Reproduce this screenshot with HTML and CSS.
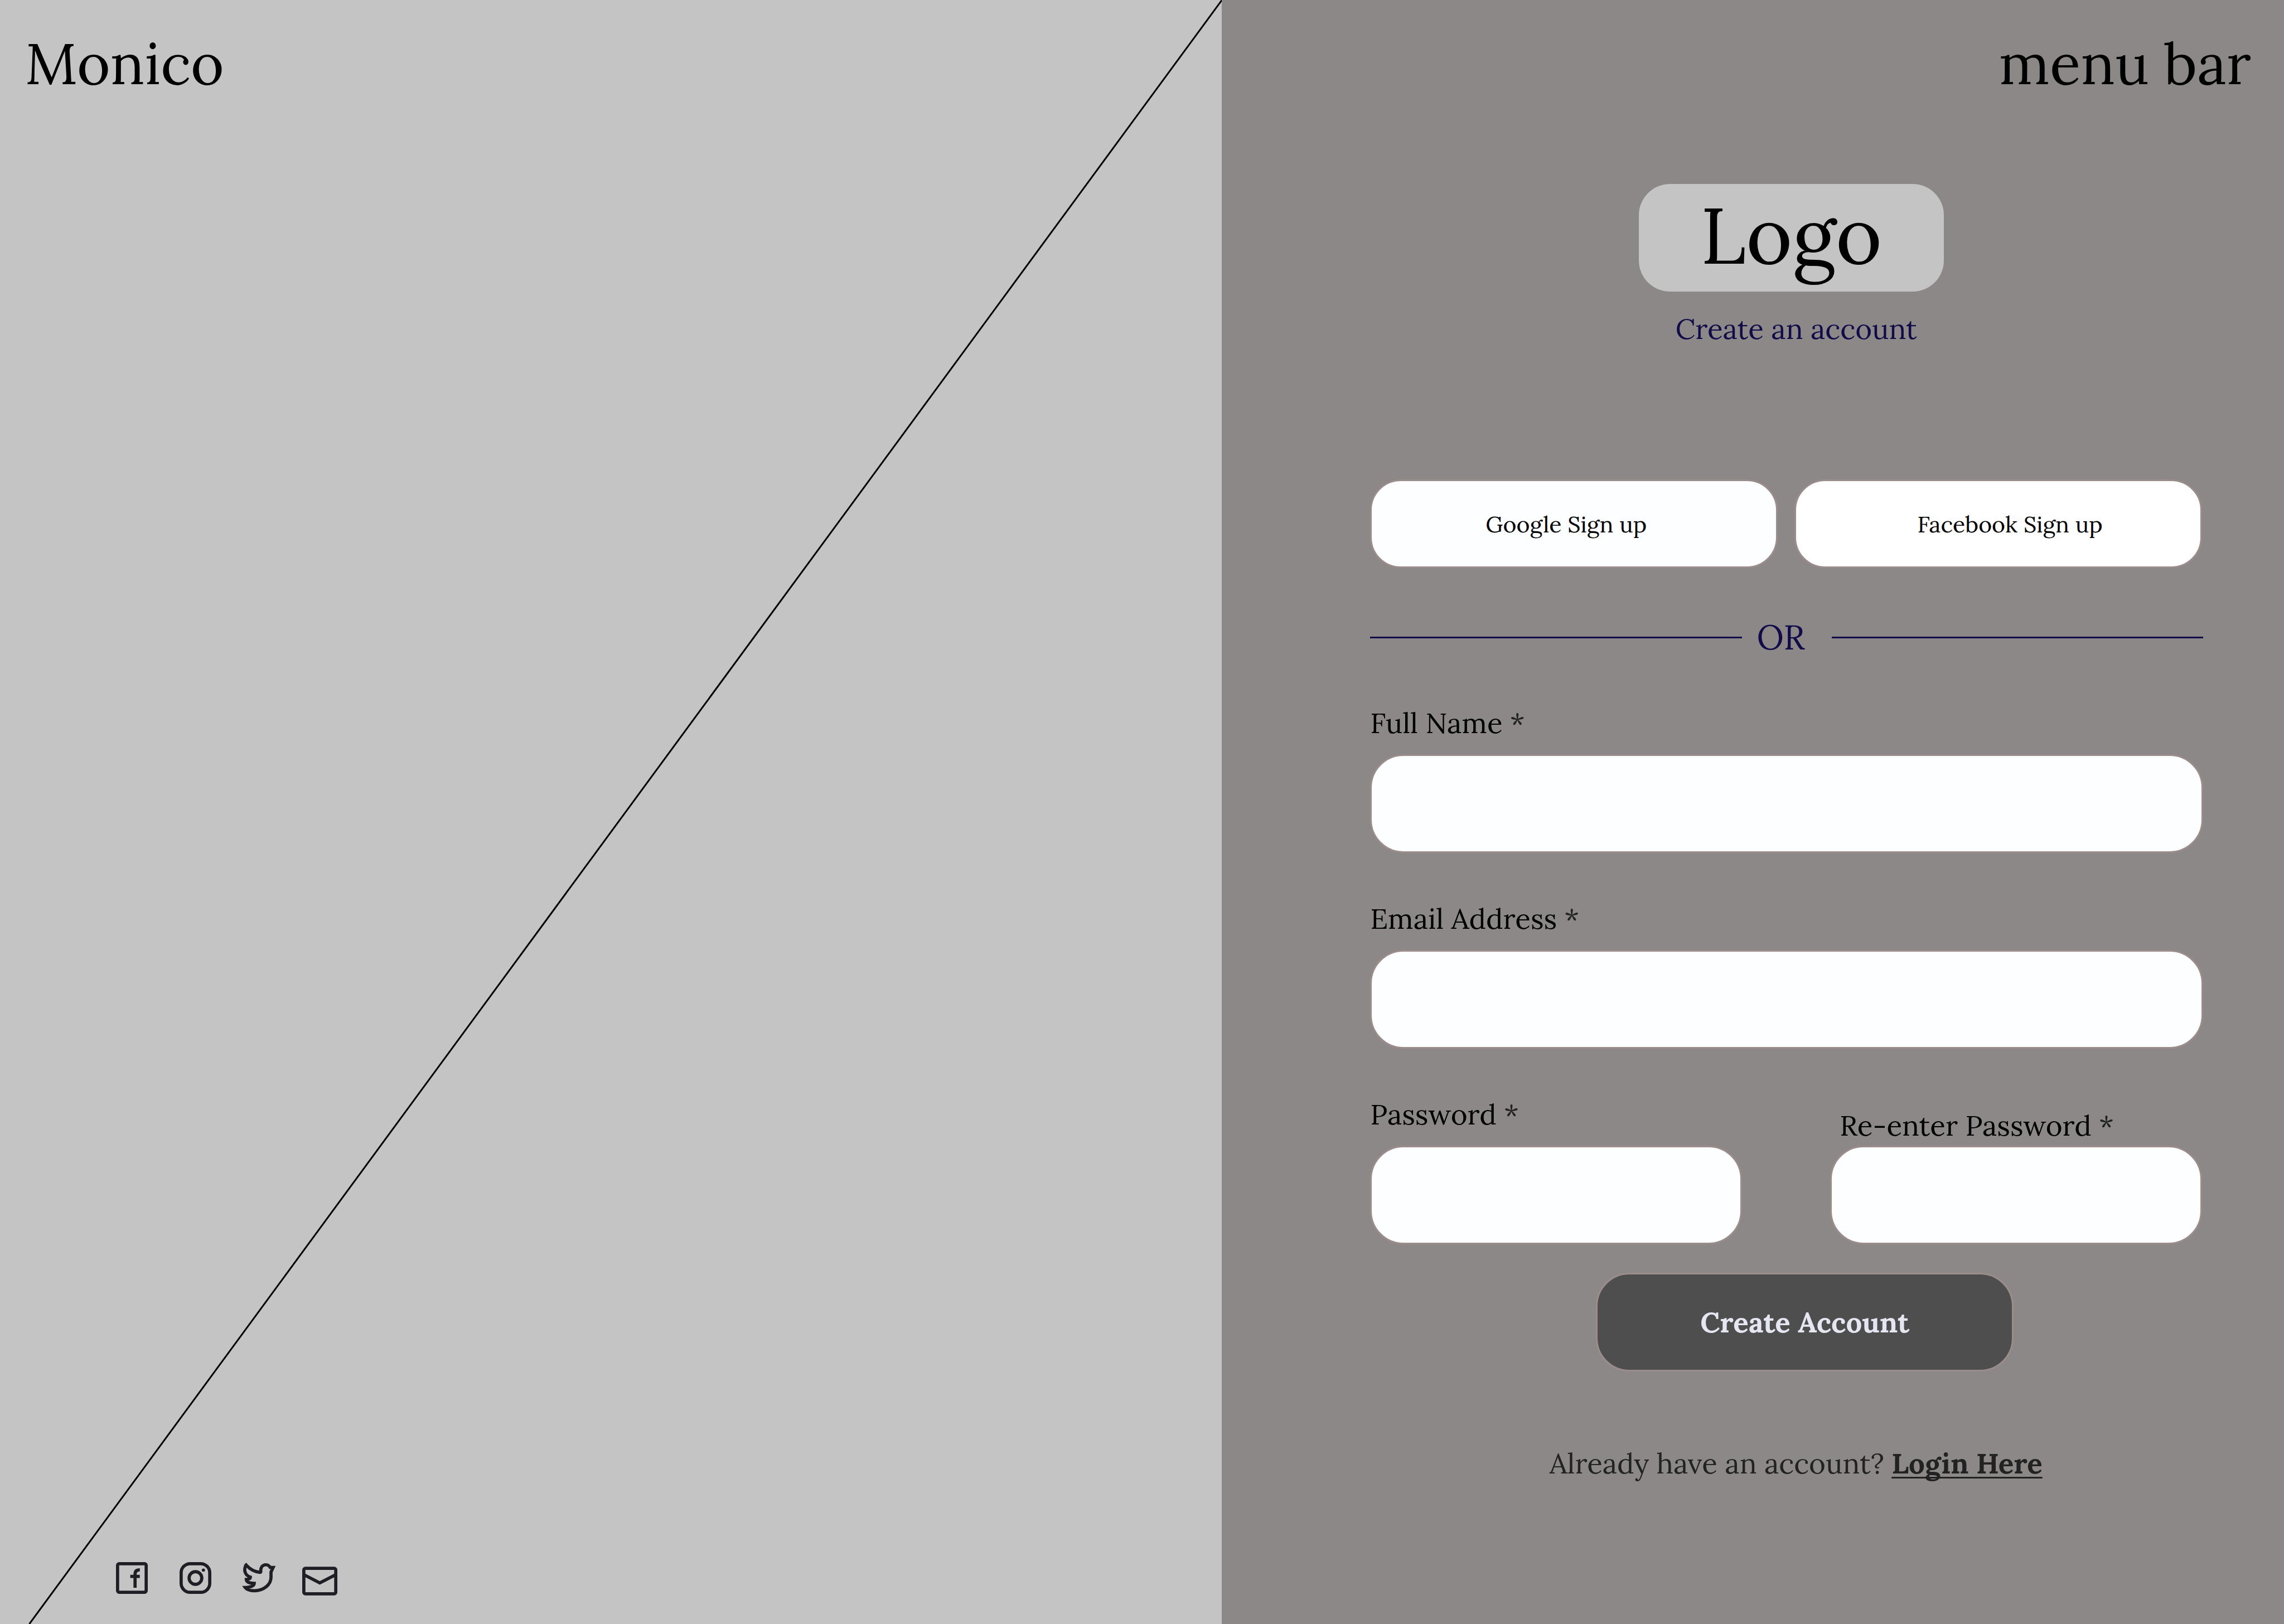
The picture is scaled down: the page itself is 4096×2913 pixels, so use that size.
FILE: index.html
```html
<!DOCTYPE html>
<html lang="en">
<head>
<meta charset="utf-8">
<title>Monico - Create an account</title>
<meta name="viewport" content="width=device-width, initial-scale=1">
<link rel="stylesheet" href="styles.css">
</head>
<body>
<div class="page">
  <section class="hero">
    <svg class="hero-line" aria-hidden="true"><line x1="100%" y1="0" x2="2.4%" y2="100%"/></svg>
    <a class="brand" href="#">Monico</a>
    <nav class="social" aria-label="Social media">
      <a class="social-link" href="#" aria-label="Facebook">
        <svg class="icon" viewBox="0 0 180 180"><rect x="9" y="9" width="162" height="162" rx="9"/><path d="M108 145V68Q108 44 135 44M81 81H135"/></svg>
      </a>
      <a class="social-link" href="#" aria-label="Instagram">
        <svg class="icon" viewBox="0 0 180 180"><rect x="9" y="9" width="162" height="162" rx="51"/><circle cx="90" cy="90" r="36"/><circle class="dot" cx="135" cy="45" r="9"/></svg>
      </a>
      <a class="social-link" href="#" aria-label="Twitter">
        <svg class="icon" viewBox="0 0 180 180"><path d="M17 16C38 40 66 55 96 58Q101 58 100 50C98 10 140 6 153 30L170 30L158 56V88C156 128 118 162 63 162C38 162 22 158 12 144C38 144 62 136 63 120C38 120 19 114 18 98C32 97 41 92 41 85C14 76 4 52 12 26Q13 20 17 16Z"/></svg>
      </a>
      <a class="social-link" href="#" aria-label="Email">
        <svg class="icon icon-mail" viewBox="0 0 198 162"><rect x="9" y="9" width="180" height="144" rx="9"/><path d="M9 45L99 91L189 45"/></svg>
      </a>
    </nav>
  </section>

  <main class="panel">
    <button class="menu" type="button">menu bar</button>
    <div class="content">
      <div class="logo-row"><div class="logo">Logo</div></div>
      <h1 class="title">Create an account</h1>
      <form class="form">
        <div class="providers">
          <button class="provider provider-google" type="button">Google Sign up</button>
          <button class="provider provider-facebook" type="button">Facebook Sign up</button>
        </div>
        <div class="divider"><span class="divider-text">OR</span></div>
        <div class="field">
          <label class="label" for="name">Full Name <span class="star">*</span></label>
          <input class="input" id="name" type="text">
        </div>
        <div class="field">
          <label class="label" for="email">Email Address <span class="star">*</span></label>
          <input class="input" id="email" type="email">
        </div>
        <div class="field-pair">
          <div class="field">
            <label class="label" for="password">Password <span class="star">*</span></label>
            <input class="input" id="password" type="password">
          </div>
          <div class="field field-tight">
            <label class="label" for="repeat">Re-enter Password <span class="star">*</span></label>
            <input class="input" id="repeat" type="password">
          </div>
        </div>
        <div class="submit-row"><button class="submit" type="submit">Create Account</button></div>
      </form>
      <p class="login">Already have an account? <a class="login-link" href="#">Login Here</a></p>
    </div>
  </main>
</div>
</body>
</html>
```
FILE: styles.css
```css
* {
  box-sizing: border-box;
}

body {
  margin: 0;
  font-family: Lora, "Liberation Serif", serif;
  color: #000;
  background: #8c8887;
}

button,
input {
  font-family: inherit;
  color: inherit;
}

.page {
  display: grid;
  grid-template-columns: 53.5% 1fr;
  min-height: 100vh;
}

/* Left side */
.hero {
  position: relative;
  display: flex;
  flex-direction: column;
  justify-content: space-between;
  align-items: flex-start;
  padding: 46px 45px 51px;
  background: #c4c4c4;
}

.hero-line {
  position: absolute;
  inset: 0;
  width: 100%;
  height: 100%;
  stroke: #000;
  stroke-width: 3;
}

.brand {
  position: relative;
  font-size: 102px;
  line-height: 136px;
  color: #000;
  text-decoration: none;
}

.social {
  position: relative;
  display: flex;
  align-items: flex-end;
  gap: 57px;
  height: 60px;
  padding-left: 163px;
}

.social-link {
  display: flex;
  height: 60px;
}

.social-link:last-child {
  align-items: flex-end;
  margin-left: -8px;
}

.icon {
  width: 57px;
  height: 57px;
  overflow: visible;
  fill: none;
  stroke: #1e1e24;
  stroke-width: 18;
}

.icon-mail {
  width: 63px;
  height: 52px;
}

.dot {
  fill: #1e1e24;
  stroke: none;
}

/* Right side */
.panel {
  display: flex;
  flex-direction: column;
  padding: 46px 0 60px;
}

.menu {
  align-self: flex-end;
  margin-right: 59px;
  padding: 0;
  border: 0;
  background: none;
  font-size: 102px;
  line-height: 136px;
}

.content {
  margin: 148px 145px 0 266px;
}

.logo-row {
  display: flex;
  justify-content: center;
  padding-left: 16px;
}

.logo {
  width: 547px;
  padding: 9px 0 20px;
  border-radius: 56px;
  background: #c4c4c4;
  font-size: 142px;
  line-height: 164px;
  text-align: center;
}

.title {
  margin: 31px 0 0;
  padding-left: 34px;
  font-size: 51px;
  font-weight: 400;
  line-height: 72px;
  text-align: center;
  color: #110c49;
}

.form {
  margin-top: 234px;
}

.providers {
  display: grid;
  grid-template-columns: 1fr 1fr;
  gap: 30px;
  margin-right: 2px;
}

.provider {
  height: 159px;
  padding: 0;
  border: 3px solid #9b8d8b;
  border-radius: 55px;
  background: #fff;
  font-size: 41px;
}

.provider-google {
  padding-right: 28px;
  background: #fdfeff;
}

.provider-facebook {
  padding-left: 42px;
}

.divider {
  display: flex;
  align-items: center;
  margin-top: 88px;
  color: #110c49;
}

.divider::before,
.divider::after {
  content: "";
  flex: 1;
  height: 3px;
  background: #110c49;
}

.divider-text {
  padding: 0 48px 0 27px;
  font-size: 61px;
  line-height: 72px;
}

.field {
  display: flex;
  flex-direction: column;
  gap: 22px;
  margin-top: 84px;
}

.field-pair {
  display: grid;
  grid-template-columns: 1fr 1fr;
  align-items: end;
  gap: 158px;
  margin-right: 2px;
}

.field-tight {
  gap: 2px;
}

.field-tight .label {
  padding-left: 17px;
}

.label {
  font-size: 51px;
  line-height: 68px;
  white-space: nowrap;
}

.star {
  color: #222;
}

.input {
  width: 100%;
  height: 177px;
  padding: 0 56px;
  border: 3px solid #9b8d8b;
  border-radius: 60px;
  background: #fdfeff;
  font-size: 51px;
}

.submit-row {
  display: flex;
  justify-content: center;
  margin-top: 51px;
  padding-left: 65px;
}

.submit {
  width: 749px;
  height: 177px;
  border: 3px solid #9b8d8b;
  border-radius: 60px;
  background: #4e4e4e;
  font-size: 51px;
  font-weight: 700;
  color: #e6e6f2;
}

.login {
  margin: 130px 0 0;
  padding-left: 33px;
  font-size: 51px;
  line-height: 70px;
  text-align: center;
  color: #222;
}

.login-link {
  font-weight: 700;
  color: #222;
  text-decoration: underline;
  text-decoration-thickness: 3px;
  text-decoration-skip-ink: none;
  text-underline-offset: 6px;
}
```
